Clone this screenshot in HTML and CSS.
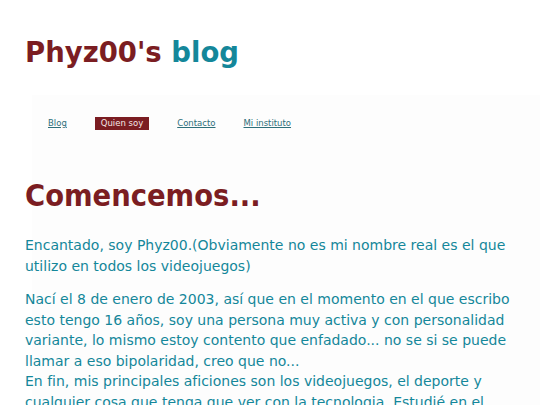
FILE: index.html
```html
<!DOCTYPE html>
<html lang="es">
<head>
<meta charset="utf-8">
<title>Phyz00's blog</title>
<link rel="stylesheet" href="styles.css">
</head>
<body>
<header class="site-header">
  <h1 class="site-title">Phyz00's <span class="accent">blog</span></h1>
</header>
<div class="page">
  <nav class="nav">
    <a href="#" class="nav-link">Blog</a>
    <a href="#" class="nav-link active">Quien soy</a>
    <a href="#" class="nav-link">Contacto</a>
    <a href="#" class="nav-link">Mi instituto</a>
  </nav>
  <main class="content">
    <h2 class="heading">Comencemos...</h2>
    <p>Encantado, soy Phyz00.(Obviamente no es mi nombre real es el que utilizo en todos los videojuegos)</p>
    <p>Nací el 8 de enero de 2003, así que en el momento en el que escribo esto tengo 16 años, soy una persona muy activa y con personalidad variante, lo mismo estoy contento que enfadado... no se si se puede llamar a eso bipolaridad, creo que no...<br>En fin, mis principales aficiones son los videojuegos, el deporte y cualquier cosa que tenga que ver con la tecnologia. Estudié en el instituto desde hace unos años y me gusta mucho la informática.</p>
  </main>
</div>
</body>
</html>
```
FILE: styles.css
```css
html, body {
  margin: 0;
  padding: 0;
  background: #ffffff;
  font-family: "DejaVu Sans", Verdana, sans-serif;
}
.site-header {
  padding: 37px 25px 0;
  height: 58px;
}
.site-title {
  margin: 0;
  font-size: 27.5px;
  font-weight: bold;
  color: #7b1d22;
  line-height: 30px;
}
.accent {
  color: #14879a;
}
.page {
  margin-left: 32px;
  background: #fdfdfd;
}
.nav {
  display: flex;
  gap: 28px;
  padding: 22px 0 0 16px;
  height: 50px;
  box-sizing: border-box;
  align-items: flex-start;
}
.nav-link {
  font-size: 8.5px;
  color: #2e6f7a;
  text-decoration: underline;
  padding: 2px 0;
  line-height: 9px;
}
.nav-link.active {
  background: #7b1d22;
  color: #f4e6e6;
  text-decoration: none;
  padding: 2px 6px;
}
.content {
  margin-left: -7px;
  padding: 34px 0 0 0;
}
.heading {
  margin: 0 0 22px;
  font-family: "DejaVu Sans Condensed", "DejaVu Sans", sans-serif;
  font-size: 30.5px;
  font-weight: bold;
  color: #7b1d22;
  line-height: 34px;
}
.content p {
  margin: 0 0 13px;
  font-size: 14px;
  line-height: 20.5px;
  color: #14879a;
  padding-right: 20px;
}
```
